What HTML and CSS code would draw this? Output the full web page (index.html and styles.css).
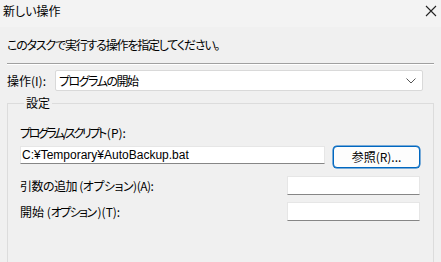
FILE: index.html
```html
<!DOCTYPE html>
<html>
<head>
	<title>新しい操作</title>
	<meta charset="utf-8">
	<link rel="stylesheet" href="styles.css">
</head>
<body>
<div class="dialog">
	<div class="titlebar">
		<span class="title">新しい操作</span>
		<svg class="close" width="12" height="12" viewBox="0 0 12 12"><path d="M1 1L11 11M11 1L1 11" stroke="#222" stroke-width="1.1" fill="none"/></svg>
	</div>
	<div class="content">
		<div class="desc">このタスクで実行する操作を指定してください。</div>
		<div class="sep"></div>
		<div class="action-row">
			<span class="action-label">操作(I):</span>
			<div class="combo">
				<span class="combo-text">プログラムの開始</span>
				<svg class="chev" width="10" height="6" viewBox="0 0 10 6"><path d="M0.5 0.5L5 5L9.5 0.5" stroke="#555" stroke-width="1" fill="none"/></svg>
			</div>
		</div>
		<fieldset class="group">
			<legend>設定</legend>
			<div class="label first"><span class="kana">プログラム/スクリプト</span>(P):</div>
			<div class="prog-row">
				<div class="textbox wide">C:¥Temporary¥AutoBackup.bat</div>
				<div class="button">参照(R)...</div>
			</div>
			<div class="opt-row args">
				<span class="label">引数の追加 (オプション)(A):</span>
				<div class="textbox short"></div>
			</div>
			<div class="opt-row start">
				<span class="label">開始 (<span class="kana">オプション</span>)(T):</span>
				<div class="textbox short"></div>
			</div>
		</fieldset>
	</div>
</div>
</body>
</html>
```

FILE: styles.css
```css
*{box-sizing:border-box;}
html,body{margin:0;padding:0;}
body{
	width:441px;
	height:262px;
	overflow:hidden;
	background:#f0f0f0;
	color:#000;
	font:12px/18px "Noto Sans CJK JP","Noto Sans",sans-serif;
	font-feature-settings:"palt";
}

.titlebar{
	display:flex;
	align-items:center;
	justify-content:space-between;
	height:27px;
	padding:0 4px 6px 3px;
	background:#f3f3f3;
}

.content{padding:0 7px;}
.desc{margin-top:9px;letter-spacing:-1.2px;}
.sep{
	margin-top:9px;
	height:2px;
	border-top:1px solid #a0a0a0;
	border-bottom:1px solid #fff;
}

.action-row{
	display:flex;
	align-items:center;
	margin-top:5px;
}
.action-label{width:48px;}
.combo{
	display:flex;
	align-items:center;
	justify-content:space-between;
	width:368px;
	height:21px;
	padding:0 6px 0 3px;
	background:#fff;
	border:1px solid #d9d9d9;
	border-radius:2px;
}
.combo-text{letter-spacing:-1.5px;}

.group{
	margin:4px 0 0 0;
	padding:0 12px;
	height:170px;
	border:1px solid #dcdcdc;
}
.group legend{
	padding:0 2px;
	margin-left:4px;
	line-height:16px;
}
.label.first{margin-top:13px;}
.label.first .kana{letter-spacing:-2.4px;margin-right:2px;}
.args .label{letter-spacing:-0.5px;}
.start .label .kana{letter-spacing:-1.6px;margin-right:2px;}

.textbox{
	height:18px;
	padding:0 0 0 1px;
	background:#fff;
	border:1px solid #e6e6e6;
	border-bottom:1px solid #868686;
	font-family:"Liberation Sans",Arial,sans-serif;
	line-height:16px;
}
.prog-row{
	display:flex;
	align-items:flex-start;
	margin-top:4px;
}
.textbox.wide{width:305px;}
.button{
	margin-left:8px;
	width:87px;
	height:22px;
	text-align:center;
	line-height:20px;
	background:#fdfdfd;
	border:1px solid #0067c0;
	border-radius:4px;
	box-shadow:0 0 0 0.5px #0067c0;
}

.opt-row{
	display:flex;
	align-items:center;
	justify-content:space-between;
	padding-right:1px;
}
.opt-row.args{margin-top:8px;}
.opt-row.start{margin-top:7px;}
.textbox.short{width:133px;height:19px;}
```
